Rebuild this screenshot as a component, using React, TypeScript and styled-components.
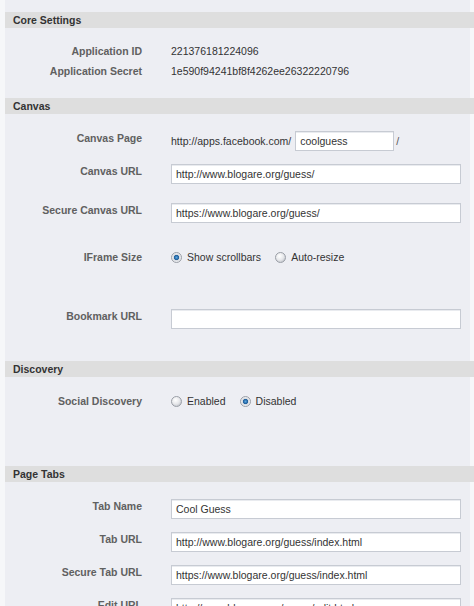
import React from "react";
import styled, { createGlobalStyle } from "styled-components";

const Global = createGlobalStyle`
  html, body { margin: 0; padding: 0; background: #f6f7f9; }
  body { font-family: "Liberation Sans", Arial, sans-serif; font-size: 10.5px; color: #333; }
`;

const Page = styled.div`
  padding: 12px 4px 0 5px;
  background: #f6f7f9;
  min-height: 606px;
  box-sizing: border-box;
`;

const Panel = styled.div`
  background: #edeef3;
  margin-top: -12px;
  padding-top: 12px;
`;

const Section = styled.section``;

const Bar = styled.div`
  height: 16px;
  line-height: 16px;
  background: #dedede;
  margin-right: -4px;
  padding-left: 8px;
  font-weight: bold;
  color: #333;
`;

const Body = styled.div<{ $pt: number; $pb: number }>`
  padding-top: ${(p) => p.$pt}px;
  padding-bottom: ${(p) => p.$pb}px;
`;

const Row = styled.div<{ $mt?: number }>`
  display: flex;
  align-items: flex-start;
  margin-top: ${(p) => p.$mt ?? 0}px;
`;

const Label = styled.div`
  width: 137px;
  flex: none;
  text-align: right;
  font-weight: bold;
  color: #606060;
  line-height: 14px;
`;

const Value = styled.div`
  margin-left: 29px;
  display: flex;
  align-items: center;
  line-height: 14px;
  color: #333;
`;

const Input = styled.div<{ $w: number }>`
  width: ${(p) => p.$w}px;
  height: 20px;
  box-sizing: border-box;
  background: #fff;
  border: 1px solid #c7cbd3;
  box-shadow: inset 0 1px 0 #e9ebef;
  padding: 0 4px;
  line-height: 18px;
  color: #333;
  white-space: nowrap;
  overflow: hidden;
`;

const Prefix = styled.span`
  margin-right: 4px;
`;

const Suffix = styled.span`
  margin-left: 2px;
  color: #555;
`;

const Options = styled.div`
  display: flex;
  align-items: center;
`;

const Option = styled.label<{ $gap: number }>`
  display: flex;
  align-items: center;
  margin-right: ${(p) => p.$gap}px;
`;

const Radio = styled.span<{ $on?: boolean }>`
  width: 11px;
  height: 11px;
  box-sizing: border-box;
  border-radius: 50%;
  border: 1px solid #9a9ea6;
  background: ${(p) =>
    p.$on
      ? "radial-gradient(circle at 50% 50%, #5aa6e0 0, #1f5f9c 2.2px, #d8dbe0 3px, #f4f5f7 5px)"
      : "radial-gradient(circle at 40% 35%, #ffffff 0, #e6e7ea 4px, #c9ccd2 6px)"};
  margin-right: 5px;
  flex: none;
`;

function TextRow({ label, value, mt }: { label: string; value: string; mt?: number }) {
  return (
    <Row $mt={mt}>
      <Label>{label}</Label>
      <Value>{value}</Value>
    </Row>
  );
}

function InputRow({ label, value, mt }: { label: string; value: string; mt?: number }) {
  return (
    <Row $mt={mt}>
      <Label>{label}</Label>
      <Value>
        <Input $w={290}>{value}</Input>
      </Value>
    </Row>
  );
}

export default function App() {
  return (
    <>
      <Global />
      <Page>
        <Panel>
          <Section>
            <Bar>Core Settings</Bar>
            <Body $pt={16} $pb={20}>
              <TextRow label="Application ID" value="221376181224096" />
              <TextRow label="Application Secret" value="1e590f94241bf8f4262ee26322220796" mt={6} />
            </Body>
          </Section>
          <Section>
            <Bar>Canvas</Bar>
            <Body $pt={17} $pb={32}>
              <Row>
                <Label>Canvas Page</Label>
                <Value>
                  <Prefix>http://apps.facebook.com/</Prefix>
                  <Input $w={99}>coolguess</Input>
                  <Suffix>/</Suffix>
                </Value>
              </Row>
              <InputRow label="Canvas URL" value="http://www.blogare.org/guess/" mt={13} />
              <InputRow label="Secure Canvas URL" value="https://www.blogare.org/guess/" mt={19} />
              <Row $mt={27}>
                <Label>IFrame Size</Label>
                <Value>
                  <Options>
                    <Option $gap={14}>
                      <Radio $on />
                      Show scrollbars
                    </Option>
                    <Option $gap={0}>
                      <Radio />
                      Auto-resize
                    </Option>
                  </Options>
                </Value>
              </Row>
              <InputRow label="Bookmark URL" value="" mt={45} />
            </Body>
          </Section>
          <Section>
            <Bar>Discovery</Bar>
            <Body $pt={17} $pb={58}>
              <Row>
                <Label>Social Discovery</Label>
                <Value>
                  <Options>
                    <Option $gap={14}>
                      <Radio />
                      Enabled
                    </Option>
                    <Option $gap={0}>
                      <Radio $on />
                      Disabled
                    </Option>
                  </Options>
                </Value>
              </Row>
            </Body>
          </Section>
          <Section>
            <Bar>Page Tabs</Bar>
            <Body $pt={17} $pb={40}>
              <InputRow label="Tab Name" value="Cool Guess" />
              <InputRow label="Tab URL" value="http://www.blogare.org/guess/index.html" mt={13} />
              <InputRow label="Secure Tab URL" value="https://www.blogare.org/guess/index.html" mt={13} />
              <InputRow label="Edit URL" value="http://www.blogare.org/guess/edit.html" mt={13} />
            </Body>
          </Section>
        </Panel>
      </Page>
    </>
  );
}
